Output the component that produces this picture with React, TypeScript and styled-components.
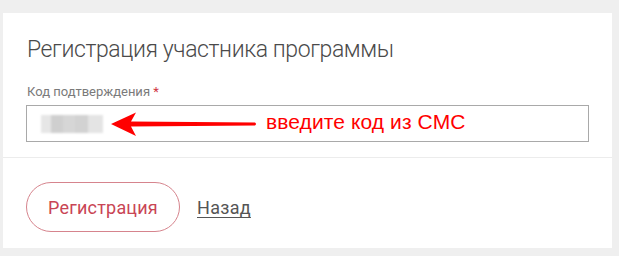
import React from "react";
import styled, { createGlobalStyle } from "styled-components";

const Global = createGlobalStyle`
  html, body { margin: 0; padding: 0; background: #efefef; }
  body { font-family: Roboto, "Noto Sans", sans-serif; }
`;

const Page = styled.div`
  padding: 13px 7px 8px 3px;
`;

const Card = styled.div`
  background: #fff;
  height: 235px;
  display: flex;
  flex-direction: column;
`;

const Top = styled.div`
  padding: 23px 23px 15px 23px;
  border-bottom: 1px solid #ececec;
  display: flex;
  flex-direction: column;
`;

const Title = styled.h1`
  margin: 0 0 0 1px;
  font-family: Roboto, sans-serif;
  font-weight: 300;
  font-size: 23px;
  line-height: 27px;
  color: #4a4a4a;
  letter-spacing: -0.4px;
`;

const Label = styled.div`
  margin: 21px 0 0 1px;
  font-size: 13px;
  line-height: 16px;
  color: #7a7a7a;
`;

const Star = styled.span`
  color: #d0343f;
`;

const InputBox = styled.div`
  position: relative;
  margin-top: 5px;
  height: 35px;
  border: 1px solid #a9a9a9;
  display: flex;
  align-items: center;
  padding-left: 14px;
`;

const Blur = styled.div`
  display: flex;
  filter: blur(1.2px);
  height: 18px;
`;

const Cell = styled.div<{ $c: string; $w: number }>`
  width: ${(p) => p.$w}px;
  height: 18px;
  background: ${(p) => p.$c};
`;

const Arrow = styled.svg`
  position: absolute;
  left: 82px;
  top: 5px;
`;

const Note = styled.span`
  position: absolute;
  left: 239px;
  top: 4px;
  font-family: "Liberation Sans", Arial, sans-serif;
  font-size: 21px;
  line-height: 24px;
  color: #ff0000;
  letter-spacing: 0.1px;
`;

const Bottom = styled.div`
  padding: 24px 23px 0 23px;
  display: flex;
  align-items: center;
  gap: 17px;
`;

const Button = styled.button`
  width: 154px;
  height: 50px;
  border-radius: 25px;
  border: 1px solid #d6848d;
  background: #fff;
  color: #c94555;
  font-family: Roboto, sans-serif;
  font-size: 18px;
  padding: 0;
  letter-spacing: 0.2px;
`;

const Back = styled.a`
  font-size: 18px;
  color: #555;
  text-decoration: underline;
  text-underline-offset: 3px;
  letter-spacing: 0.3px;
`;

export default function App() {
  const cells: [string, number][] = [
    ["#e6e6e6", 10],
    ["#cfcfcf", 12],
    ["#d6d6d6", 12],
    ["#d2d2d2", 13],
    ["#e4e4e4", 15],
  ];
  return (
    <>
      <Global />
      <Page>
        <Card>
          <Top>
            <Title>Регистрация участника программы</Title>
            <Label>
              Код подтверждения <Star>*</Star>
            </Label>
            <InputBox>
              <Blur>
                {cells.map(([c, w], i) => (
                  <Cell key={i} $c={c} $w={w} />
                ))}
              </Blur>
              <Arrow width="150" height="26" viewBox="0 0 150 26">
                <path
                  d="M2 13 L27 1.5 L22 10.5 L146 11.5 Q148 13 146 14.5 L22 15.5 L27 25 Z"
                  fill="#ff0000"
                />
              </Arrow>
              <Note>введите код из СМС</Note>
            </InputBox>
          </Top>
          <Bottom>
            <Button>Регистрация</Button>
            <Back>Назад</Back>
          </Bottom>
        </Card>
      </Page>
    </>
  );
}
